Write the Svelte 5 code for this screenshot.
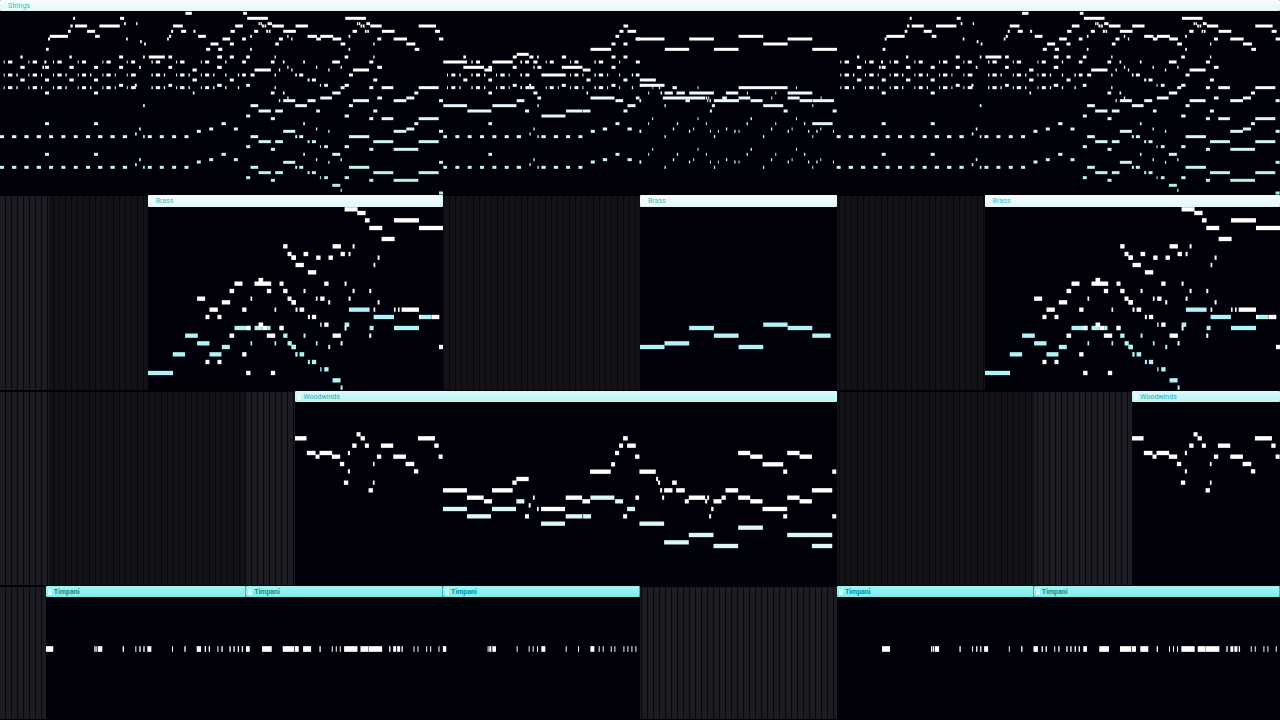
<script>
  const BAR = 147.58;

  const parse = (rows, dx = 0, dy = 0) =>
    Object.entries(rows).flatMap(([y, spans]) =>
      spans.split(' ').map((s) => {
        const [a, b] = s.split('-').map(Number);
        return { x: a + dx, w: b - a, y: Number(y) + dy };
      })
    );

  const pulse = '11-14 24-37 49-53 85-88 98-111 123-126 159-162 172-185 196-200 233-236 246-258 270-274 307-310 319-332 344-347 380-383 393-407 454-458 467-480 491-495 528-531 540-553 565-569 602-605 615-627 639-643';
  const pulse2 = '20-23 33-45 57-61 93-97 107-119 131-135 167-170 180-193 205-208 240-245 255-267';
  const pulse3 = '389-392 402-414 426-429 462-466 475-488 500-503 536-539 574-578';

  const opening = {
    40: '556-575',
    55: '219-225 360-372',
    71: '372-377 408-412',
    78: '211-218 225-261 298-359 519-548',
    94: '204-212 261-285 513-519 543-558 580-586',
    109: '149-204 285-299 507-513 594-617',
    117: '144-150 378-383 501-506',
    125: '420-425',
    132: '432-437 631-655',
    148: '138-146 618-630 654-666',
    171: '61-68 208-215 357-369 429-434 446-494 505-516 651-664',
    186: '11-14 24-37 85-88 98-111 133-139 159-162 172-185 233-236 246-258 307-310 319-332 380-383 393-405 454-458 467-480 528-531 540-553 602-605 615-627',
    202: '61-74 127-132 135-147 208-221 282-294 357-369 417-422 505-516 651-664',
    210: '577-590',
    225: pulse,
    240: '61-74 135-147 208-221 282-294 577-590',
    256: '357-369 404-410 505-516 651-664',
    263: pulse,
    279: '135-147 282-294 578-583',
    317: '429-434'
  };
  const openingBass = {
    371: '135-147 282-294',
    387: '417-422 627-639',
    394: '590-602',
    402: '405-410',
    410: '0-12 36-49 73-86 110-123 147-159 184-196 221-233 258-270 294-307 331-344 368-381 429-434 443-455 479-491 516-528 553-565'
  };
  const build = {
    40: '69-80',
    55: '81-143 375-437',
    71: '115-119 121-125 142-155 410-414 416-420 438-449',
    78: '45-68 125-131 133-138 156-191 226-263 421-426 428-433 450-484 595-647',
    94: '31-44 102-114 138-144 146-151 189-227 397-410 434-439 441-446 485-523 644-659',
    109: '90-95 201-205 262-290 300-339 385-390',
    117: '7-30 66-77 176-188 213-217 288-302 337-363 471-483 520-560 656-669',
    132: '29-41 165-176 361-375 459-463 558-585',
    148: '0-6 90-95 385-390 583-597',
    171: '0-5 29-41 78-89 163-167 373-384 459-463',
    186: '15-19 66-77 152-163 188-193 249-254 336-359 447-459',
    202: '0-4 201-205 287-291 361-365 471-485',
    210: '103-152 176-180 213-217 324-328 398-446',
    225: '15-19 53-57 66-77 91-103 163-167 225-230 237-249 386-398',
    240: '29-41 262-268 275-287 459-471',
    256: '0-4 78-89 299-302 312-323 373-386',
    263: '15-19 53-57 163-167 361-373 447-459 484-519 595-655',
    279: '152-163 188-193 336-361 582-594',
    294: '201-205 300-335 471-485 558-582',
    302: '176-180 189-225 262-286 398-446 520-558 656-668',
    317: '91-114 225-260 386-398',
    333: '115-152 165-188 288-299 459-471',
    348: '78-90 373-386',
    356: '152-164 447-459 484-519 595-655',
    371: '4-17 249-254 582-594',
    387: '41-53 287-291 558-582',
    394: '189-225 324-328 520-558 656-668',
    410: '91-114 225-231 237-249 386-447',
    425: '115-152 165-188 262-268 275-287 459-519 595-655',
    440: '78-90 299-302 312-323 373-386',
    448: '152-164 447-459 520-594',
    463: '4-17 249-254 336-360',
    479: '41-53 287-291 361-365',
    487: '189-225 324-328 656-668',
    502: '91-114 225-231 237-249 386-447',
    518: '115-152 165-188 262-268 275-287 459-519 595-655',
    533: '78-90 299-302 312-323 373-386',
    541: '152-164 447-459 520-594',
    556: '336-360',
    571: '361-365',
    579: '656-668'
  };
  const middle = {
    78: '549-563',
    94: '537-549 561-587',
    109: '525-536',
    117: '585-598',
    132: '513-525 549-561',
    148: '450-512',
    163: '229-265',
    171: '69-77 217-229 267-279 290-295 364-377 513-525 549-561',
    186: '9-80 93-97 107-119 156-217 240-245 254-266 279-291 316-319 328-340 389-392 402-414 462-466 475-488 536-539 586-598',
    202: '69-131 144-155 217-229 279-283 291-303 364-426 513-525',
    210: '132-155 427-450',
    225: pulse2 + ' 303-376 ' + pulse3 + ' 586-597',
    240: '69-81 144-155 438-450 549-561',
    256: '217-229 266-272 364-376 513-525 598-603',
    263: pulse2 + ' 267-282 316-319 328-340 352-355 ' + pulse3,
    279: '144-155 279-291 438-443',
    294: '291-302 450-522 586-597',
    302: '229-252 525-548 597-601',
    317: '9-80 156-228 291-295 561-585',
    333: '81-153 254-266 377-426 427-450 549-561',
    348: '303-375'
  };
  const middleBass = {
    371: '144-155 525-537',
    387: '279-283 487-500 561-574',
    394: '451-463 597-602',
    402: '267-271',
    410: '9-20 45-57 82-94 119-131 156-168 193-205 229-242 291-295 303-316 340-353 377-389 414-426'
  };
  const chorale = {
    109: '306-380',
    117: '0-84 158-232 453-527',
    132: '380-453',
    148: '85-158 232-306 527-601',
    240: '10-58',
    256: '10-84',
    263: '48-50 67-71 108-121 183-186 306-453 478-481',
    279: '35-38 72-77 84-109 120-145 158-232 268-305 331-334 416-419 453-527',
    294: '79-206 208-212 215-218 257-271 306-341 404-407 453-489 552-555',
    302: '10-14 147-160 212-215 219-223 232-307 342-378 489-527 528-592',
    317: '84-88 226-235 380-440 527-530',
    333: '220-226 441-453 588-600',
    371: '527-588'
  };
  const choraleBass = {
    356: '47-50 183-186 342-346 478-481',
    371: '35-38 121-125 208-211 330-334 416-419 502-506',
    387: '109-113 170-173 268-272 403-407 465-468 551-554',
    394: '10-14 157-161 220-223 244-247 293-297 306-309 453-457 514-518 539-543 589-592',
    410: '84-88 232-236 379-383 527-530'
  };

  const theme = (at) => [
    ...parse(opening, at),
    ...parse(openingBass, at),
    ...parse(openingBass, at, 92),
    ...parse(build, at + 660)
  ];
  const strings = [
    ...theme(0),
    ...parse(middle, 1320),
    ...parse(middleBass, 1320),
    ...parse(middleBass, 1320, 92),
    ...parse(chorale, 1908),
    ...parse(choraleBass, 1908),
    ...parse(choraleBass, 1908, 92),
    ...theme(2508)
  ];

  const tinted = (notes) => notes.map((n) => ({ ...n, low: true }));

  const brass = [
    ...tinted(parse({
      414: '282-330 342-366 380-390 417-429',
      437: '134-172 428-441',
      460: '170-207 330-335 402-407 441-453',
      471: '244-268 453-466',
      493: '97-134 207-243 465-470',
      549: '22-98'
    }, 420)),
    ...parse({
      169: '428-441', 192: '441-453', 203: '453-466',
      270: '354-368', 281: '282-306 342-392 417-429',
      303: '267-281 379-392 428-441', 326: '170-194 330-335 441-453',
      337: '244-269 453-466', 359: '207-232 305-318 402-407',
      381: '195-207 231-243', 404: '354-368', 414: '318-330 366-380 417-429',
      437: '267-281 379-404', 493: '305-318', 516: '195-207 231-243',
      549: '317-330 391-404'
    }, 420),
    ...tinted(parse({
      359: '175-237', 381: '249-310 391-421', 404: '162-176',
      414: '237-249 310-385', 437: '39-45', 460: '0-3 76-81',
      471: '3-16 113-119', 493: '15-21 27-41', 516: '52-58 64-77',
      538: '89-93 101-114', 571: '126-150', 593: '150-156'
    }, 870)),
    ...parse({
      58: '162-201', 69: '200-225', 91: '223-237 310-385',
      114: '236-275 385-459', 147: '273-312', 169: '126-151 186-192',
      192: '39-53 150-163 174-180', 203: '3-16 77-90 114-127 261-267',
      225: '15-40 249-254', 247: '52-77', 281: '101-114 162-168',
      303: '39-45 186-192 236-242', 326: '76-81 89-102 174-180',
      337: '3-16 113-119 261-267', 359: '15-21 27-41 249-254 310-315 322-327 333-385',
      381: '52-58 64-77 385-391 422-446', 404: '89-93 101-114',
      415: '162-168', 437: '126-151 236-242', 460: '150-156', 471: '445-459'
    }, 870),
    ...tinted(parse({
      471: '10-84 306-380', 460: '84-158', 414: '158-232 453-527',
      437: '232-306 527-582', 404: '380-453'
    }, 1908))
  ];

  const winds = [
    ...parse({
      139: '200-212', 151: '15-50 212-225 384-435',
      173: '187-200 225-237 273-310 433-446', 195: '51-77 89-127 174-180',
      206: '77-89 126-151 261-274 310-348 446-458', 228: '150-163 249-254 347-373',
      250: '174-180 372-385', 284: '162-175 249-254', 307: '236-249'
    }, 870),
    ...parse({
      40: '549-563', 62: '537-549 561-587', 84: '525-537', 95: '585-598',
      118: '513-525', 140: '450-512', 162: '229-266', 173: '217-230',
      196: '9-81 156-218', 218: '81-131 279-284 377-426 586-597',
      229: '132-156 427-450', 241: '266-272', 252: '291-296 303-375',
      274: '255-267 549-561'
    }, 1320, 111),
    ...tinted(parse({
      218: '451-523', 229: '229-253 525-549', 252: '9-81 156-228 561-585',
      274: '81-153 377-427 429-453', 296: '303-375'
    }, 1320, 111)),
    ...parse({
      84: '306-342 453-490', 95: '342-379 490-527', 118: '379-441',
      140: '10-59 441-453 588-600', 162: '60-66', 173: '66-72 108-122',
      196: '72-78 84-109 120-146 268-306 527-588',
      218: '78-84 158-207 213-219 256-269 306-342 453-490',
      229: '146-158 207-213 232-256 342-379 490-527', 252: '225-232 379-453',
      274: '219-225 441-453 588-600'
    }, 1908, 111),
    ...tinted(parse({
      296: '10-84', 308: '306-380', 330: '158-232 453-588',
      352: '84-158', 363: '232-306 527-588'
    }, 1908, 111))
  ];

  const timpani = [
    ...parse({
      207: '135-159 282-286 288-291 293-306 367-371 405-408 417-421 429-433 441-453 515-518 552-556 589-602 613-617 625-629 651-654 663-667 687-691 699-703 712-716 724-728'
    }),
    ...parse({
      207: '3-14 51-80 113-147 149-161 174-198 223-227 260-263 272-275 284-287 297-337 346-370 371-411 432-436 444-453 456-465 469-473 505-508 517-520 543-546 555-558 580-583 593-603 727-730 732-738 741-752 814-817 850-853 862-865 875-878 888-900 961-964 998-1001 1035-1047 1060-1063 1072-1075 1096-1099 1107-1110 1134-1137 1146-1149 1158-1161 1170-1173'
    }, 735)
  ];

  // Clips are placed in bars: start, end, and the bar of the part they play from.
  const tracks = [
    { name: 'Strings', kind: 'strings', top: 33, size: 9, notes: strings, clips: [[0, 26, 0]] },
    { name: 'Brass', kind: 'brass', top: 48, size: 13, notes: brass, clips: [[3, 9, 3], [13, 17, 13], [20, 26, 3]] },
    { name: 'Woodwinds', kind: 'winds', top: 42, size: 13, notes: winds, clips: [[6, 17, 6], [23, 26, 6]] },
    { name: 'Timpani', kind: 'timpani', top: 51, size: 17, notes: timpani, clips: [[0.93, 5, 0.93], [5, 9, 5], [9, 13, 9], [17, 21, 0], [21, 26, 4]] }
  ];

  const segments = (clips) => {
    const out = [];
    let at = 0;
    for (const [start, end, source] of clips) {
      if (start > at) out.push({ bars: start - at, empty: true });
      out.push({ bars: end - start, source });
      at = end;
    }
    return out;
  };

  const visible = (notes, seg) => {
    const a = seg.source * BAR - 6;
    const b = (seg.source + seg.bars) * BAR;
    return notes.filter((n) => n.x >= a && n.x < b);
  };

  // The grid is shaded in alternating sections of the song.
  const sections = [0, 1, 5, 9, 13, 17, 21, 26];
  const shading = sections
    .slice(1)
    .map((end, i) => {
      const from = (sections[i] / 26) * 100;
      const to = (end / 26) * 100;
      return `${i % 2 ? '#131317' : '#1c1c22'} ${from}% ${to}%`;
    })
    .join(', ');
</script>

<main class="playlist">
  {#each tracks as track}
    <section class="lane {track.kind}" aria-label={track.name} style="--shading: linear-gradient(90deg, {shading})">
      {#each segments(track.clips) as seg}
        {#if seg.empty}
          <div class="empty" style="flex-grow: {seg.bars}"></div>
        {:else}
          <article class="clip" style="flex-grow: {seg.bars}">
            <header><i></i><span>{track.name}</span></header>
            <svg viewBox="{seg.source * BAR} {track.top} {seg.bars * BAR} 552" preserveAspectRatio="none" aria-hidden="true">
              <defs>
                <linearGradient id="pitch" gradientUnits="userSpaceOnUse" x1="0" y1="200" x2="0" y2="580">
                  <stop offset="0" stop-color="#fff" />
                  <stop offset="0.35" stop-color="#e2f8fb" />
                  <stop offset="0.7" stop-color="#cef4f6" />
                  <stop offset="1" stop-color="#a8eded" />
                </linearGradient>
              </defs>
              {#each visible(track.notes, seg) as n}
                <rect class:low={n.low} x={n.x} y={n.y - track.size / 2} width={n.w} height={track.size} />
              {/each}
            </svg>
          </article>
        {/if}
      {/each}
    </section>
  {/each}
</main>

<style>
  :global(body) {
    margin: 0;
    background: #000006;
  }
  .playlist {
    display: grid;
    grid-template-rows: 195px 196px 195px 1fr;
    height: 100vh;
    overflow: hidden;
    background: #000005;
    font-family: Roboto, 'Liberation Sans', sans-serif;
  }
  .lane {
    display: flex;
    min-height: 0;
    overflow: hidden;
    background:
      repeating-linear-gradient(90deg, transparent 0 5px, #08080c 5px 6px),
      var(--shading);
  }
  .empty,
  .clip {
    flex: 1 1 0;
    min-width: 0;
  }
  .empty {
    box-sizing: border-box;
    border: solid #000005;
    border-width: 1px 0;
  }
  .clip {
    display: flex;
    flex-direction: column;
    background: #000009ee;
  }
  header {
    box-sizing: border-box;
    flex: none;
    display: flex;
    align-items: center;
    gap: 2px;
    height: 11px;
    padding-left: 2px;
    border-radius: 1px;
    background: linear-gradient(#f6fdfd, #e4f6f8);
    color: #35bfc2;
    font-size: 7px;
    line-height: 9px;
    padding-top: 1px;
  }
  .brass header {
    height: 12px;
    margin-bottom: -1px;
  }
  header i {
    width: 4px;
    height: 6px;
  }
  .winds header {
    background: linear-gradient(#d8fcfb, #baf4f4);
    color: #2aa9ac;
  }
  .winds header i {
    background: #e0fdfd;
  }
  .timpani header {
    border-right: 1px solid #35b9bb;
    background: linear-gradient(#a0f6f4, #7fecec);
    color: #0b8e92;
    font-weight: 700;
  }
  .timpani header i {
    background: #d4fffd;
  }
  svg {
    display: block;
    flex: none;
    width: 100%;
    height: 184px;
    overflow: hidden;
  }
  rect {
    fill: #fff;
  }
  .strings rect {
    fill: url(#pitch);
  }
  .brass .low {
    fill: #b2f3f7;
  }
  .winds .low {
    fill: #daf7fb;
  }
</style>
